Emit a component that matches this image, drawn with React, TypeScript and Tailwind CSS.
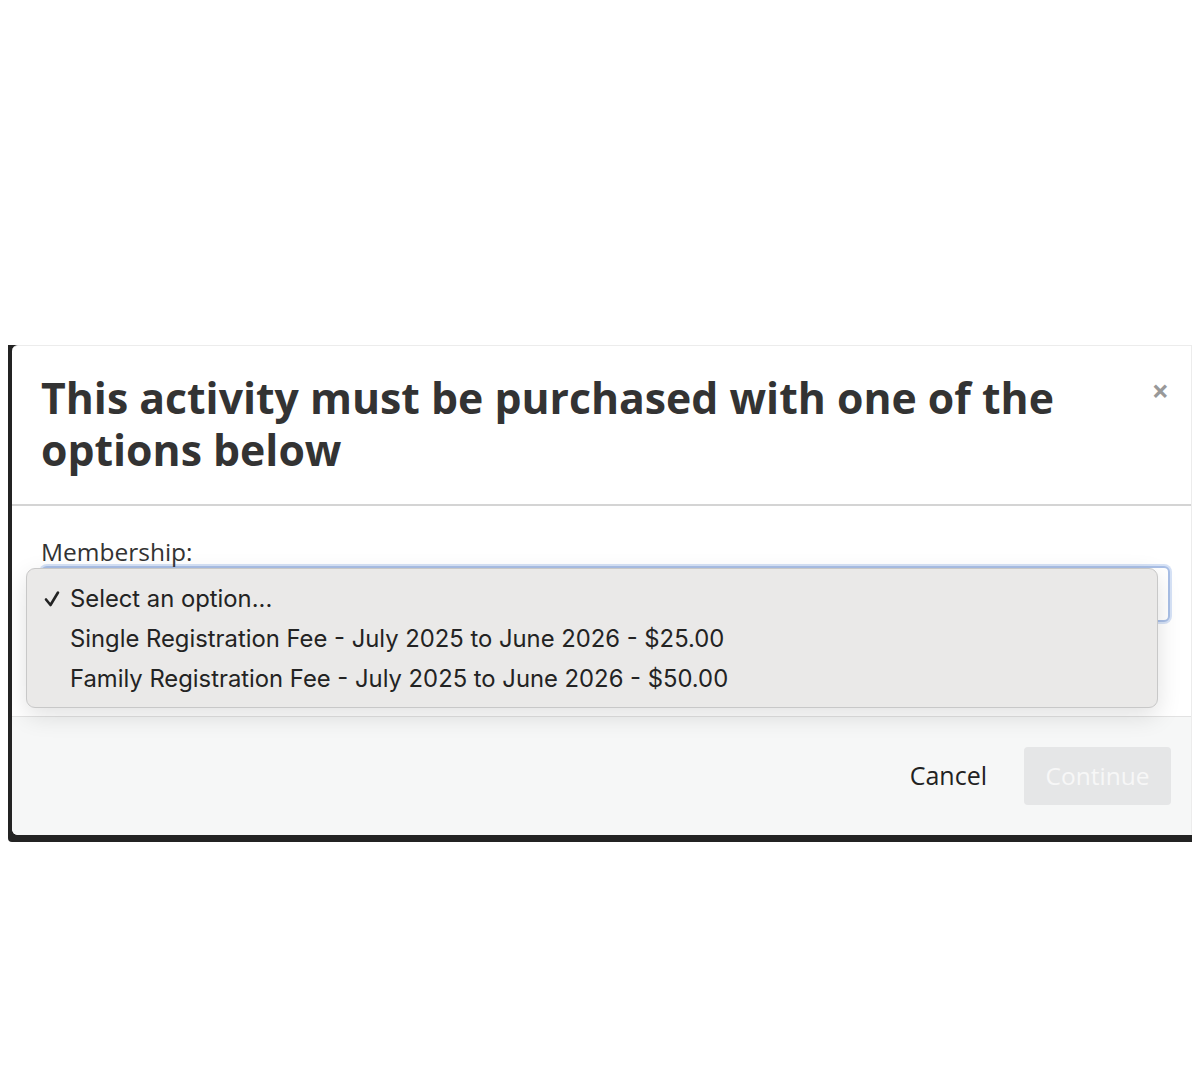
import React from "react";

export default function App() {
  return (
    <div className="w-[1200px] h-[1080px] bg-white" style={{ fontFamily: '"Open Sans", sans-serif' }}>
      <div className="h-[345px]" />
      <div className="ml-[8px] w-[1184px] bg-[#232323] pl-[4px] pb-[7px] rounded-bl-[4px]">
        <div className="relative bg-white rounded-l-[6px] border-t border-r border-[#ececec] overflow-visible">
          {/* header */}
          <div className="relative h-[160px] border-b-2 border-[#d4d4d4] pl-[29px] pr-[120px] pt-[26px]">
            <h1 className="text-[42.75px] leading-[52px] font-bold text-[#333333]">
              This activity must be purchased with one of the options below
            </h1>
            <div className="absolute right-[22px] top-[30px] text-[#999999] text-[30px] font-bold leading-none">×</div>
          </div>
          {/* body */}
          <div className="relative h-[210px] pl-[29px] pr-[21px] pt-[31px]">
            <div className="text-[24.5px] leading-[29px] text-[#333333]">Membership:</div>
            <div className="h-[56px] rounded-[6px] border-2 border-[#a9bfe6] bg-white shadow-[0_0_0_2px_#d6e2f6] flex items-center justify-end pr-[8px]">
              <svg width="10" height="10" viewBox="0 0 10 10" className="text-[#444]">
                <path d="M2 7 L6 3" stroke="currentColor" strokeWidth="1.5" fill="none" />
              </svg>
            </div>
            {/* native dropdown */}
            <div
              className="absolute left-[14px] top-[62px] w-[1132px] h-[140px] rounded-[9px] bg-[#eae9e8] border border-[#c8c8c8] shadow-[0_8px_24px_rgba(0,0,0,0.12)] pt-[10px]"
              style={{ fontFamily: 'Inter, "Noto Sans", sans-serif' }}
            >
              <div className="flex items-center h-[40px] text-[23.8px] text-[#232323]">
                <svg width="43" height="20" viewBox="0 0 43 20" className="shrink-0">
                  <path d="M19 10.5 L23.5 16 L31 3.5" stroke="#232323" strokeWidth="2.6" fill="none" strokeLinecap="round" strokeLinejoin="round" />
                </svg>
                <span>Select an option...</span>
              </div>
              <div className="flex items-center h-[40px] text-[23.8px] text-[#232323]">
                <span className="w-[43px] shrink-0" />
                <span>Single Registration Fee - July 2025 to June 2026 - $25.00</span>
              </div>
              <div className="flex items-center h-[40px] text-[23.8px] text-[#232323]">
                <span className="w-[43px] shrink-0" />
                <span>Family Registration Fee - July 2025 to June 2026 - $50.00</span>
              </div>
            </div>
          </div>
          {/* footer */}
          <div className="h-[119px] border-t border-[#e2e2e2] bg-[#f6f7f7] rounded-bl-[6px] flex items-center justify-end pr-[20px] gap-[37px]">
            <span className="text-[25px] text-[#222222]">Cancel</span>
            <div className="w-[147px] h-[58px] rounded-[4px] bg-[#e5e6e7] flex items-center justify-center text-[24.5px] text-[#f7f7f7]">
              Continue
            </div>
          </div>
        </div>
      </div>
    </div>
  );
}
